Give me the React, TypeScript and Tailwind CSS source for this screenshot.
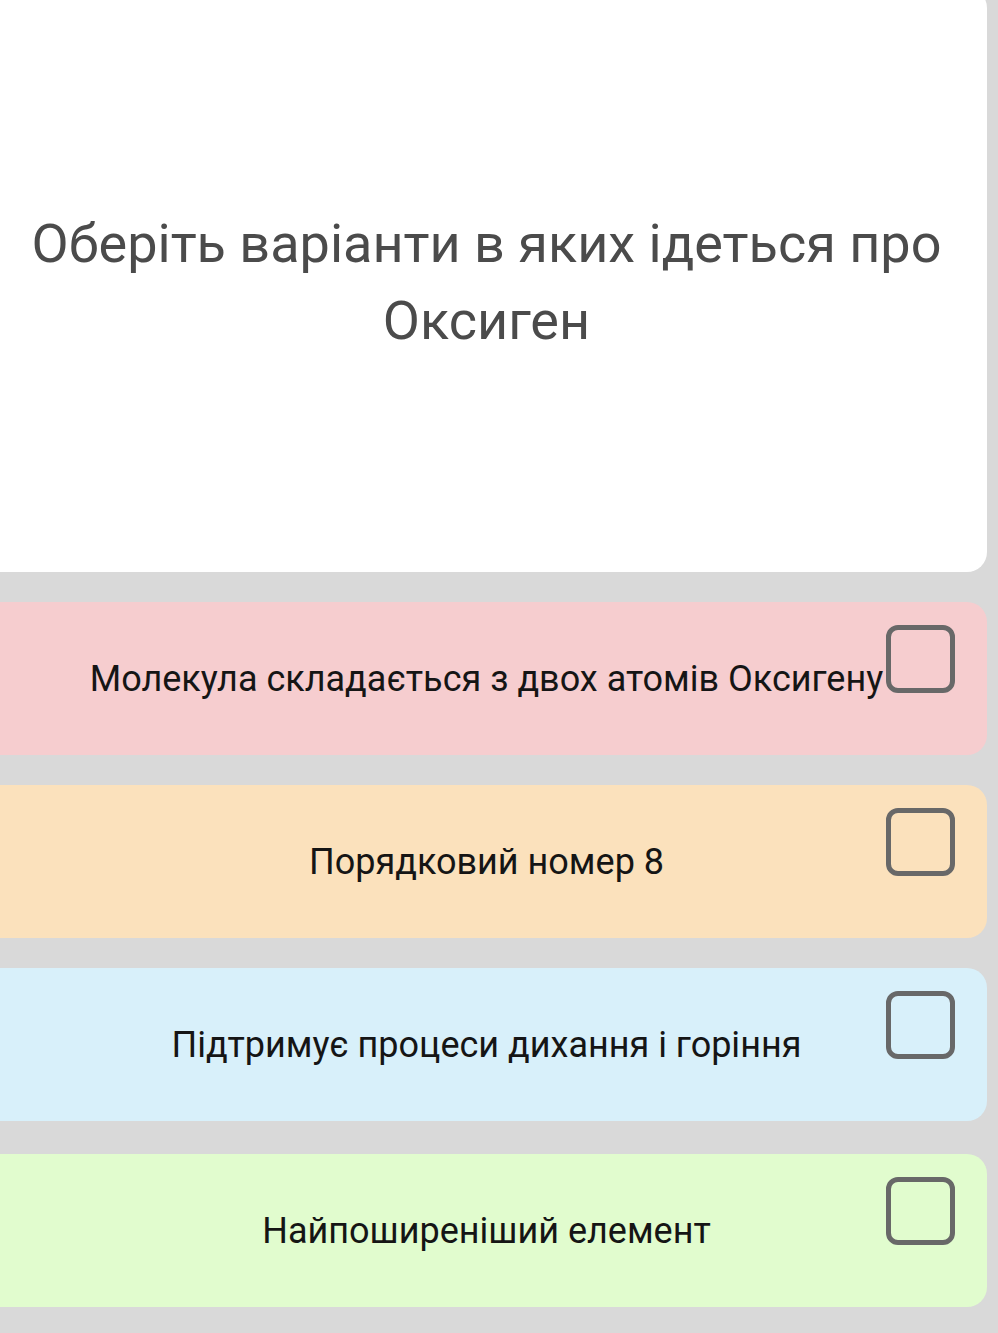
const options = [
  { text: "Молекула складається з двох атомів Оксигену", bg: "bg-[#f6cdcf]" },
  { text: "Порядковий номер 8", bg: "bg-[#fbe1bc]" },
  { text: "Підтримує процеси дихання і горіння", bg: "bg-[#d8f0fa]" },
  { text: "Найпоширеніший елемент", bg: "bg-[#e1fcce]" },
];

function Option({ text, bg }: { text: string; bg: string }) {
  return (
    <div className={`relative flex h-[153px] w-[987px] items-center justify-center rounded-r-[20px] pr-[14px] last:mt-[3px] ${bg}`}>
      <span className="text-[36px] text-[#151515]">{text}</span>
      <div className="absolute right-[32px] top-[23px] h-[68px] w-[69px] rounded-[12px] border-[5px] border-[#686868]" />
    </div>
  );
}

export default function App() {
  return (
    <div
      className="flex min-h-[1333px] flex-col bg-[#d9d9d9]"
      style={{ fontFamily: "Roboto, 'Noto Sans', sans-serif" }}
    >
      <div className="-mt-[12px] flex h-[584px] w-[987px] items-center justify-center rounded-r-[20px] bg-white pr-[14px] pt-[4px]">
        <h1 className="text-center text-[54px] leading-[77px] text-[#4b4b4b]">
          Оберіть варіанти в яких ідеться про Оксиген
        </h1>
      </div>
      <div className="mt-[30px] flex flex-col gap-[30px]">
        {options.map((o) => (
          <Option key={o.text} {...o} />
        ))}
      </div>
    </div>
  );
}
